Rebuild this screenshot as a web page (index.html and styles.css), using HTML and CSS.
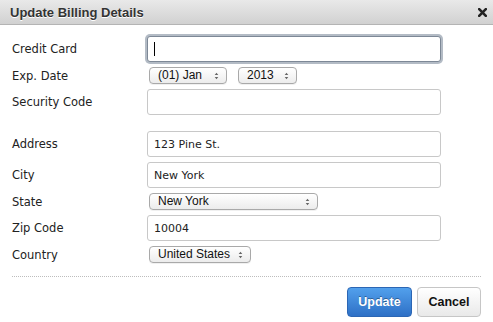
FILE: index.html
```html
<!DOCTYPE html>
<html lang="en">
<head>
    <meta charset="UTF-8">
    <meta name="viewport" content="width=device-width, initial-scale=1.0">
    <title>Update Billing Details</title>
    <link rel="stylesheet" href="styles.css">
</head>
<body>
    <div class="modal">
        <div class="modal-header">
            <h3>Update Billing Details</h3>
            <a class="close" href="#">
                <svg width="9" height="9" viewBox="0 0 9 9"><path d="M1.2 1.2 L7.8 7.8 M7.8 1.2 L1.2 7.8" stroke="#222" stroke-width="2.6" stroke-linecap="square"/></svg>
            </a>
        </div>
        <form class="modal-body">
            <div class="fields">
                <label for="cc">Credit Card</label>
                <span class="input-wrap">
                    <input id="cc" class="text focus" type="text" value="">
                    <span class="caret"></span>
                </span>

                <label>Exp. Date</label>
                <div class="select-row">
                    <span class="select month">
                        <select><option>(01) Jan</option></select>
                        <svg class="arrows" width="5" height="8" viewBox="0 0 5 8"><path d="M2.5 0.8 L4.3 3 L0.7 3 Z M2.5 7.2 L4.3 5 L0.7 5 Z" fill="#666"/></svg>
                    </span>
                    <span class="select year">
                        <select><option>2013</option></select>
                        <svg class="arrows" width="5" height="8" viewBox="0 0 5 8"><path d="M2.5 0.8 L4.3 3 L0.7 3 Z M2.5 7.2 L4.3 5 L0.7 5 Z" fill="#666"/></svg>
                    </span>
                </div>

                <label for="cvv">Security Code</label>
                <input id="cvv" class="text" type="text" value="">
            </div>

            <div class="fields address">
                <label for="addr">Address</label>
                <input id="addr" class="text" type="text" value="123 Pine St.">

                <label for="city">City</label>
                <input id="city" class="text" type="text" value="New York">

                <label>State</label>
                <div class="select-row">
                    <span class="select state">
                        <select><option>New York</option></select>
                        <svg class="arrows" width="5" height="8" viewBox="0 0 5 8"><path d="M2.5 0.8 L4.3 3 L0.7 3 Z M2.5 7.2 L4.3 5 L0.7 5 Z" fill="#666"/></svg>
                    </span>
                </div>

                <label for="zip">Zip Code</label>
                <input id="zip" class="text" type="text" value="10004">

                <label>Country</label>
                <div class="select-row">
                    <span class="select country">
                        <select><option>United States</option></select>
                        <svg class="arrows" width="5" height="8" viewBox="0 0 5 8"><path d="M2.5 0.8 L4.3 3 L0.7 3 Z M2.5 7.2 L4.3 5 L0.7 5 Z" fill="#666"/></svg>
                    </span>
                </div>
            </div>

            <div class="modal-footer">
                <button type="button" class="btn btn-primary">Update</button>
                <button type="button" class="btn">Cancel</button>
            </div>
        </form>
    </div>
</body>
</html>
```

FILE: styles.css
```css
body{
    margin: 0;
    background: #fff;
    font-family: "DejaVu Sans", Verdana, sans-serif;
    color: #222;
}

.modal{
    width: 493px;
    height: 322px;
    overflow: hidden;
}

.modal-header{
    height: 24px;
    display: flex;
    align-items: center;
    justify-content: space-between;
    padding: 0 6px 0 10px;
    background: linear-gradient(#e9e9e9, #d1d1d1);
    border-bottom: 1px solid #b4b4b4;
}
.modal-header h3{
    margin: 0;
    font: bold 13px "Liberation Sans", Arial, sans-serif;
    color: #333;
    text-shadow: 0 1px 0 #fff;
}
.close{
    display: flex;
    width: 9px;
    height: 9px;
    margin-top: 1px;
}

.modal-body{
    margin: 0;
    padding: 11px 12px 0 12px;
}

.fields{
    display: grid;
    grid-template-columns: 135px 294px;
    row-gap: 5px;
    align-items: center;
}
.fields.address{
    margin-top: 16px;
}
.fields label{
    font-size: 11.5px;
    color: #222;
}

.input-wrap{
    position: relative;
    display: block;
    height: 26px;
}
.caret{
    position: absolute;
    left: 7px;
    top: 6px;
    width: 1px;
    height: 14px;
    background: #000;
}

.text{
    display: block;
    box-sizing: border-box;
    width: 294px;
    height: 26px;
    margin: 0;
    padding: 0 6px;
    border: 1px solid #c8c8c8;
    border-radius: 3px;
    background: #fff;
    font: 11px "DejaVu Sans", Verdana, sans-serif;
    color: #222;
    outline: none;
}
.text.focus{
    border-color: #7d8896;
    box-shadow: 0 0 0 2px #b3bbc5;
}

.select-row{
    display: flex;
    gap: 11px;
    padding-left: 2px;
}
.select{
    position: relative;
    display: block;
    height: 17px;
}
.select select{
    display: block;
    -webkit-appearance: none;
    appearance: none;
    box-sizing: border-box;
    width: 100%;
    height: 17px;
    margin: 0;
    padding: 0 0 0 8px;
    border: 1px solid #a9a9a9;
    border-radius: 4px;
    background: linear-gradient(#ffffff, #ececec);
    box-shadow: 0 1px 0 rgba(0,0,0,0.06);
    font: 12px "Liberation Sans", Arial, sans-serif;
    line-height: 15px;
    color: #111;
}
.select .arrows{
    position: absolute;
    right: 8px;
    top: 4.5px;
    pointer-events: none;
}
.select.month{ width: 78px; }
.select.year{ width: 59px; }
.select.state{ width: 169px; }
.select.country{ width: 102px; }

.modal-footer{
    display: flex;
    justify-content: flex-end;
    gap: 5px;
    margin-top: 13px;
    padding-top: 10px;
    border-top: 1px dotted #bdbdbd;
}
.btn{
    box-sizing: border-box;
    height: 30px;
    width: 64px;
    margin: 0;
    padding: 0;
    border: 1px solid #c6c6c6;
    border-radius: 4px;
    background: linear-gradient(#ffffff, #e9e9e9);
    font: bold 12.5px "Liberation Sans", Arial, sans-serif;
    color: #111;
}
.btn-primary{
    width: 65px;
    border-color: #2c66b4;
    background: linear-gradient(#52a0ec, #2e70c6);
    color: #fff;
    text-shadow: 0 -1px 0 rgba(0,0,0,0.35);
}
```
